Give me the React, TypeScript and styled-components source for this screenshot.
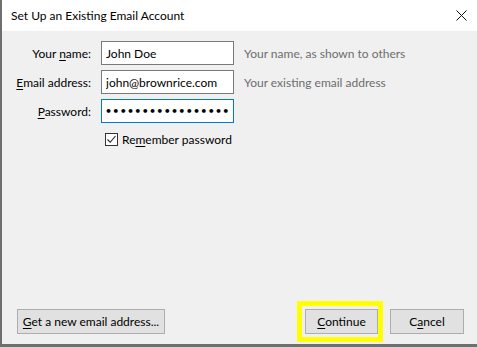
import React from "react";
import styled, { createGlobalStyle } from "styled-components";

const uiFont = `"Segoe UI", Lato, "Noto Sans", sans-serif`;

const GlobalStyle = createGlobalStyle`
	html, body {
		margin: 0;
		padding: 0;
		background: #f0f0f0;
	}
	body {
		font-family: ${uiFont};
		font-size: 12px;
		color: #000;
	}
`;

const Window = styled.div`
	width: 477px;
	height: 347px;
	box-sizing: border-box;
	border-left: 2px solid #6f6f6f;
	border-bottom: 3px solid #6f6f6f;
	display: flex;
	flex-direction: column;
	background: #f0f0f0;
	overflow: hidden;
`;

const TitleBar = styled.div`
	height: 31px;
	flex: none;
	background: #fff;
	display: flex;
	align-items: center;
	justify-content: space-between;
	padding: 0 10px 0 9px;
	.title {
		font-size: 12px;
		padding-bottom: 1px;
	}
`;

const CloseIcon = () => (
	<svg width="11" height="11" viewBox="0 0 11 11">
		<path d="M0.5 0.5 L10.5 10.5 M10.5 0.5 L0.5 10.5" stroke="#111" strokeWidth="1" fill="none" />
	</svg>
);

const Body = styled.div`
	flex: 1;
	display: flex;
	flex-direction: column;
	justify-content: space-between;
	padding: 10px 0 2px 0;
`;

const Form = styled.div`
	display: grid;
	grid-template-columns: 89px 133px auto;
	column-gap: 10px;
	row-gap: 5px;
	align-items: center;
`;

const Label = styled.label`
	text-align: right;
	white-space: nowrap;
	u {
		text-decoration-thickness: 1px;
		text-underline-offset: 2px;
	}
`;

const Field = styled.input<{ $focused?: boolean }>`
	box-sizing: border-box;
	width: 133px;
	height: 24px;
	margin: 0;
	padding: 0 4px;
	border: 1px solid ${props => props.$focused ? "#0078d7" : "#7a7a7a"};
	background: #fff;
	font-family: ${uiFont};
	font-size: 12px;
	color: #000;
	outline: none;
	&[type="password"] {
		font-family: "DejaVu Sans", sans-serif;
		font-size: 11px;
		font-weight: bold;
		letter-spacing: 0.3px;
		padding-left: 3px;
	}
`;

const Hint = styled.span`
	color: #6d6d6d;
	white-space: nowrap;
`;

const CheckRow = styled.label`
	grid-column: 2 / 4;
	display: flex;
	align-items: center;
	gap: 4px;
	margin-top: 4px;
	padding-left: 4px;
	u {
		text-underline-offset: 2px;
	}
`;

const CheckBox = styled.span`
	width: 13px;
	height: 13px;
	box-sizing: border-box;
	border: 1px solid #333;
	background: #fff;
	display: flex;
	align-items: center;
	justify-content: center;
`;

const Footer = styled.div`
	display: flex;
	align-items: center;
	justify-content: space-between;
	padding: 0 13px 0 15px;
`;

const ButtonGroup = styled.div`
	display: flex;
	align-items: center;
	gap: 7px;
`;

const Highlight = styled.div`
	border: 5px solid #ffff00;
	padding: 3px 0 3px 3px;
	display: flex;
`;

const Button = styled.button<{ $width: number }>`
	width: ${props => props.$width}px;
	height: 25px;
	margin: 0;
	padding: 0;
	border: 1px solid #adadad;
	background: #e1e1e1;
	font-family: ${uiFont};
	font-size: 12px;
	color: #000;
	white-space: nowrap;
	u {
		text-underline-offset: 2px;
	}
`;

export default function App() {
	return (
		<>
			<GlobalStyle />
			<Window>
				<TitleBar>
					<span className="title">Set Up an Existing Email Account</span>
					<CloseIcon />
				</TitleBar>
				<Body>
					<Form>
						<Label>Your <u>n</u>ame:</Label>
						<Field readOnly value="John Doe" />
						<Hint>Your name, as shown to others</Hint>

						<Label><u>E</u>mail address:</Label>
						<Field readOnly value="john@brownrice.com" />
						<Hint>Your existing email address</Hint>

						<Label><u>P</u>assword:</Label>
						<Field readOnly type="password" value="brownricepass1234" $focused />
						<span />

						<span />
						<CheckRow>
							<CheckBox>
								<svg width="11" height="11" viewBox="0 0 11 11">
									<path d="M1.5 5.5 L4.2 8.3 L9.5 2" stroke="#222" strokeWidth="1.1" fill="none" />
								</svg>
							</CheckBox>
							<span>Re<u>m</u>ember password</span>
						</CheckRow>
					</Form>
					<Footer>
						<Button $width={148}><u>G</u>et a new email address...</Button>
						<ButtonGroup>
							<Highlight>
								<Button $width={73}><u>C</u>ontinue</Button>
							</Highlight>
							<Button $width={74}>C<u>a</u>ncel</Button>
						</ButtonGroup>
					</Footer>
				</Body>
			</Window>
		</>
	);
}
